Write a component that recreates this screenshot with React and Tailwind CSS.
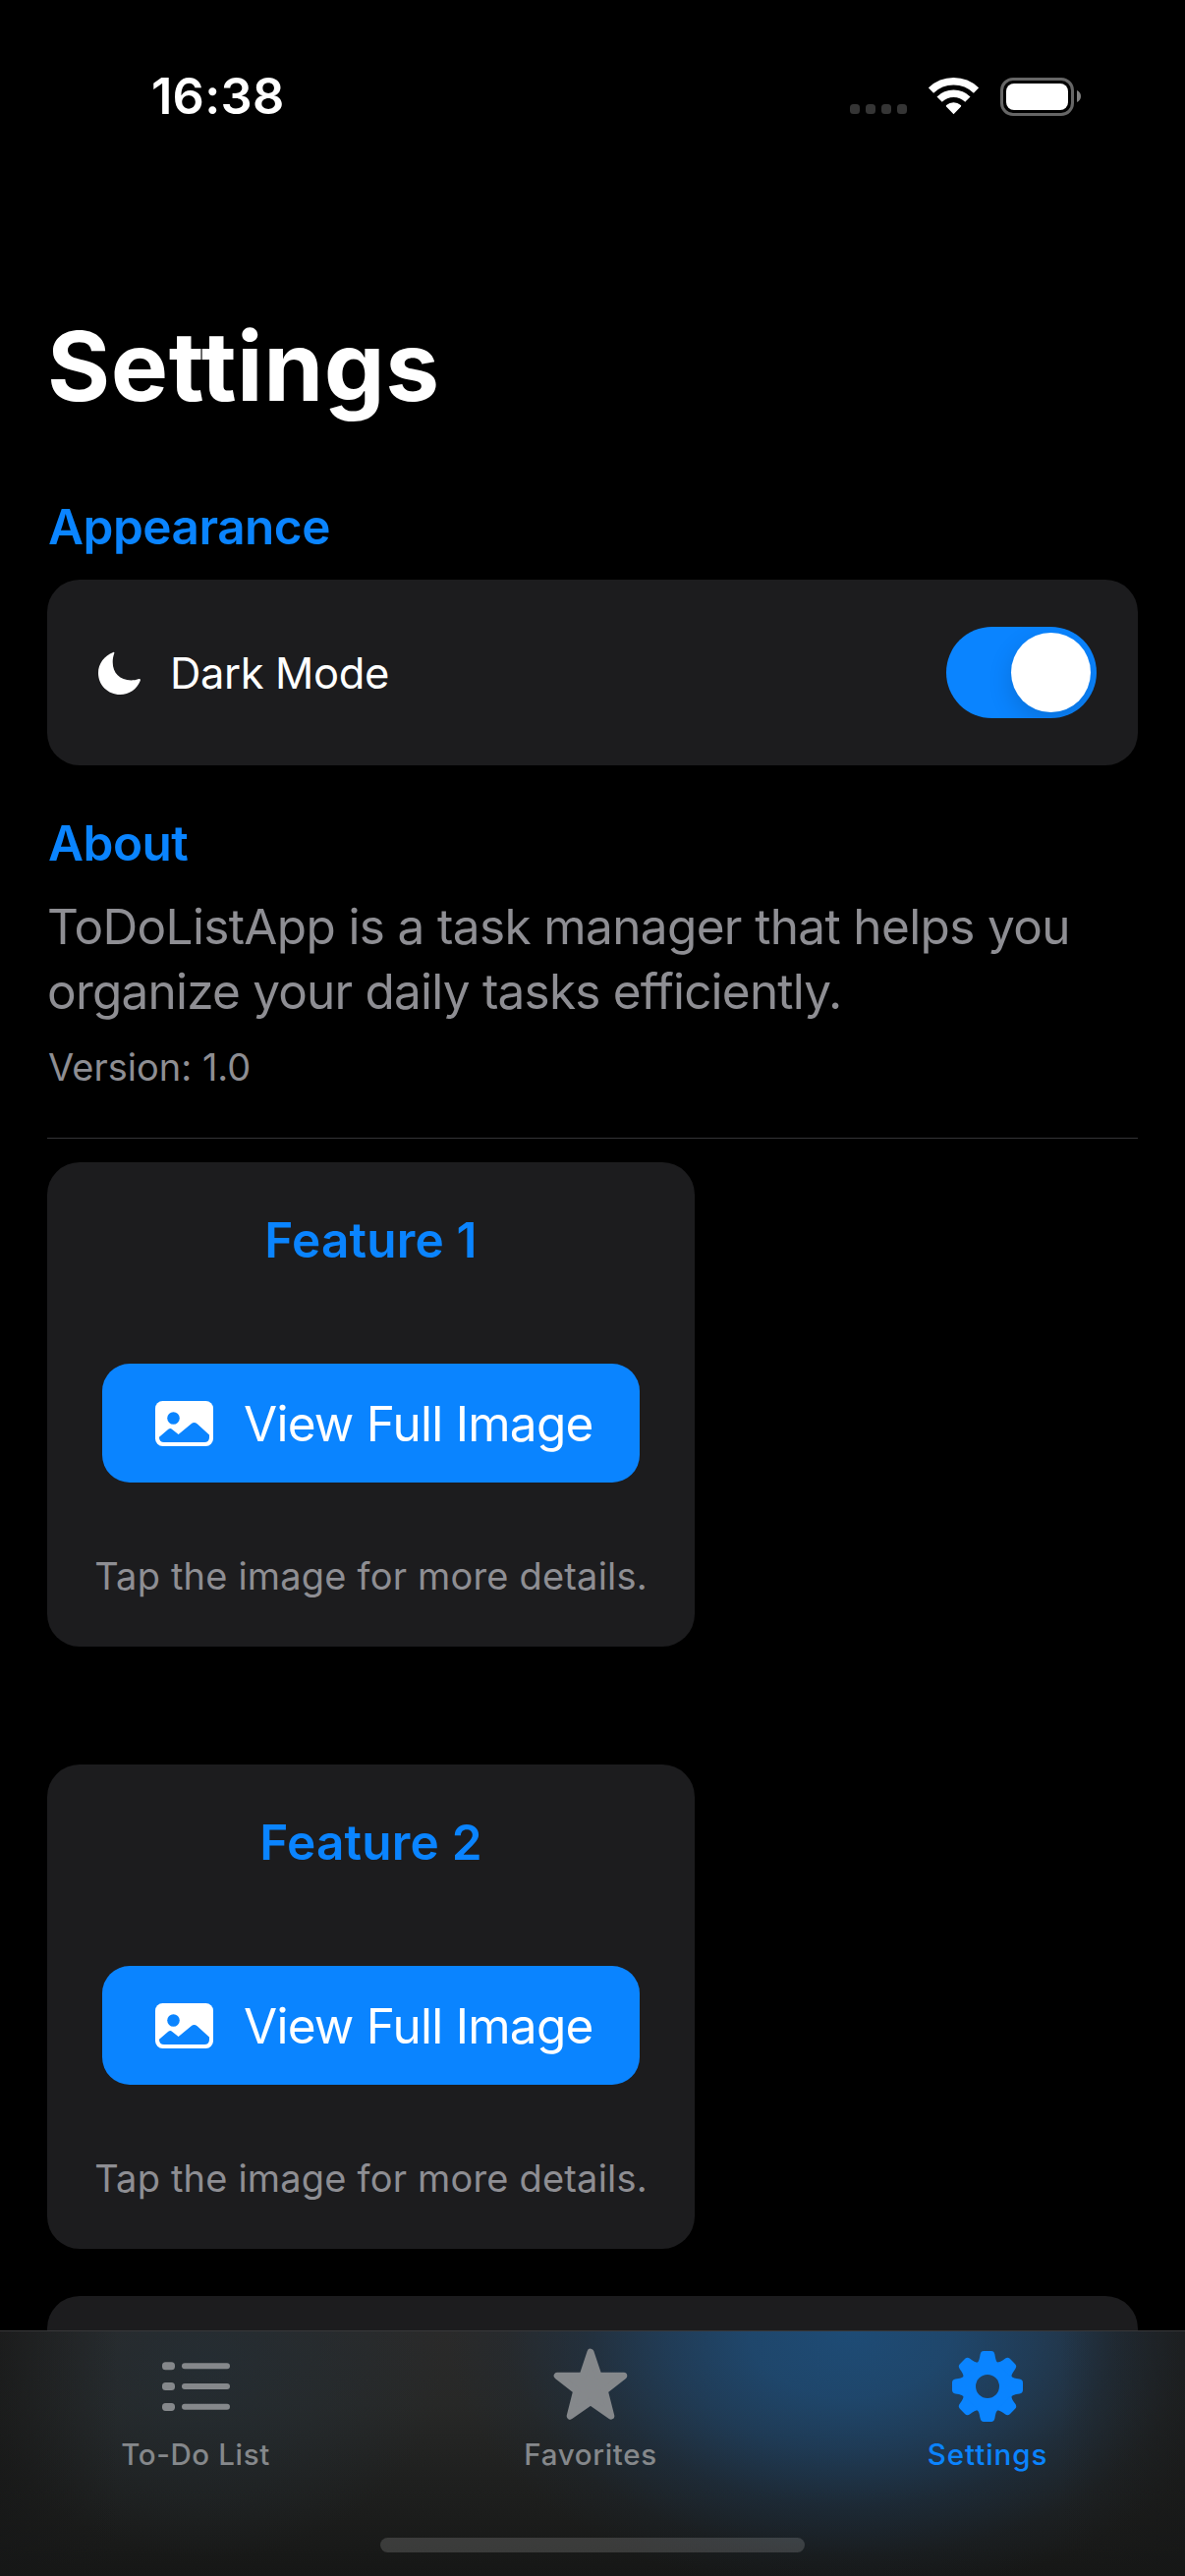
import React from "react";

function WifiIcon() {
  return (
    <svg width="51" height="38" viewBox="0 0 51 38" fill="none">
      <path d="M2.44 13.12A33.2 33.2 0 0 1 48.56 13.12" stroke="#fff" strokeWidth="7.6" />
      <path d="M11.12 22.11A20.7 20.7 0 0 1 39.88 22.11" stroke="#fff" strokeWidth="7.6" />
      <path d="M25.5 37.2L18 29.6Q17.4 28.8 18.2 28.1Q21.4 25.2 25.5 25.2Q29.6 25.2 32.8 28.1Q33.6 28.8 33 29.6Z" fill="#fff" />
    </svg>
  );
}

function MoonIcon() {
  return (
    <svg width="43" height="44" viewBox="0 0 43 44" fill="#fff">
      <path d="M15.2 .9C6 4.3 0 12.5 0 22C0 34.5 10 44 22.2 44C31.5 44 39.3 38.6 42.7 30C43.3 28.3 42.3 27.5 40.6 28.2C38.5 29 36 29.4 33.5 29.4C22 29.4 14.7 22 14.7 11C14.7 8 15.2 5 16.1 2.6C16.7 .9 16.4 .4 15.2 .9Z" />
    </svg>
  );
}

function PhotoIcon() {
  return (
    <svg width="59" height="46" viewBox="0 0 59 46">
      <rect width="59" height="46" rx="7.5" fill="#fff" />
      <circle cx="18.5" cy="17.5" r="6.3" fill="#0a84ff" />
      <path
        d="M4 36.8L13.3 28.8Q15.3 27.4 17.3 28.9L23.6 34L36.6 23.2Q39.6 20.8 42.7 23.3L55 34.4V37Q55 42 50 42H9Q4 42 4 37Z"
        fill="#0a84ff"
      />
    </svg>
  );
}

function ListIcon() {
  return (
    <svg width="69" height="50" viewBox="0 0 69 50" fill="#85888b">
      {[0, 20.8, 41.6].map((y) => (
        <g key={y}>
          <rect x="0" y={y + 0.3} width="13" height="8" rx="3.6" />
          <rect x="20" y={y + 1.2} width="49" height="6" rx="3" />
        </g>
      ))}
    </svg>
  );
}

function StarIcon() {
  return (
    <svg width="76" height="78" viewBox="0 0 76 78">
      <path
        d="M38 4.2L46 28.2H71.8L52.3 43.6L58.8 69.2L38 54.6L17.2 69.2L23.7 43.6L4.2 28.2H30Z"
        fill="#85888b"
        stroke="#85888b"
        strokeWidth="7"
        strokeLinejoin="round"
      />
    </svg>
  );
}

function GearIcon() {
  return (
    <svg width="72" height="72" viewBox="-36 -36 72 72">
      <mask id="gear-hole">
        <rect x="-36" y="-36" width="72" height="72" fill="#fff" />
        <circle r="12" fill="#000" />
      </mask>
      <g fill="#0a84ff" mask="url(#gear-hole)">
        <circle r="26.3" />
        {[0, 45, 90, 135, 180, 225, 270, 315].map((a) => (
          <path
            key={a}
            transform={`rotate(${a})`}
            d="M-11 -23.5C-8.6 -25.6 -8.2 -28 -7.4 -32.6Q-6.8 -36 -3.8 -36H3.8Q6.8 -36 7.4 -32.6C8.2 -28 8.6 -25.6 11 -23.5Z"
          />
        ))}
      </g>
    </svg>
  );
}

function StatusBar() {
  return (
    <div className="flex h-[196px] items-center justify-between pr-[106px] pl-[154px]">
      <span className="text-[50.5px] leading-[60px] font-semibold tracking-[0.25px] text-white">16:38</span>
      <div className="flex items-center">
        <div className="mt-[26px] mr-[22px] flex gap-[6px]">
          {[0, 1, 2, 3].map((i) => (
            <span key={i} className="size-[10px] rounded-[3.5px] bg-[#353535]" />
          ))}
        </div>
        <WifiIcon />
        <div className="ml-[22px] h-[39px] w-[75px] rounded-[13px] border-[3px] border-[#666] p-[3px]">
          <div className="h-full w-full rounded-[8px] bg-white" />
        </div>
        <svg className="ml-[3px]" width="4" height="12" viewBox="0 0 4 12" fill="#808080">
          <path d="M0 0C2.6 1 4 3.4 4 6C4 8.6 2.6 11 0 12Z" />
        </svg>
      </div>
    </div>
  );
}

function FeatureCard({ title }) {
  return (
    <div className="flex w-[659px] flex-col items-center rounded-[33px] bg-[#1c1c1e] py-[49px]">
      <h3 className="text-[49.5px] leading-[60px] font-semibold tracking-[0.2px] text-[#0a84ff]">{title}</h3>
      <button className="mt-[96px] flex h-[121px] w-[547px] items-center rounded-[28px] bg-[#0a84ff] pl-[54px]">
        <PhotoIcon />
        <span className="ml-[31px] text-[49.5px] leading-[60px] tracking-[-0.755px] whitespace-nowrap text-white">
          View Full Image
        </span>
      </button>
      <p className="mt-[72px] text-[38px] leading-[46px] tracking-[0.186px] whitespace-nowrap text-[#8e8e93]">
        Tap the image for more details.
      </p>
    </div>
  );
}

function Tab({ icon, label, className }) {
  return (
    <div className={`flex flex-col items-center ${className}`}>
      <div className="flex h-[76px] items-center">{icon}</div>
      <span className="mt-[13px] text-[29.5px] leading-[36px] font-medium whitespace-nowrap">{label}</span>
    </div>
  );
}

function TabBar() {
  return (
    <nav className="absolute inset-x-0 bottom-0 flex h-[250px] flex-col border-t border-[#38383a] bg-[linear-gradient(to_right,rgba(22,23,23,0.7)_0px,rgba(22,23,23,0)_120px,rgba(22,23,23,0)_1080px,rgba(22,23,23,0.6)_1206px),radial-gradient(ellipse_410px_270px_at_865px_0px,rgba(28,80,128,0.88)_0%,rgba(29,76,120,0.84)_25%,rgba(29,68,106,0.7)_45%,rgba(28,54,80,0.48)_66%,rgba(28,44,60,0.2)_85%,rgba(28,40,52,0)_100%),radial-gradient(ellipse_240px_200px_at_210px_30px,rgba(35,46,54,0.7)_0%,rgba(35,45,52,0.42)_50%,rgba(35,45,50,0)_100%),linear-gradient(to_bottom,#2a2a2a_0%,#272827_30%,#1f201f_60%,#161716_100%)]">
      <div className="grid grid-cols-[398px_406px_402px] pt-[18px]">
        <Tab className="tracking-[0.62px] text-[#85888b]" icon={<ListIcon />} label="To-Do List" />
        <Tab className="tracking-[0.66px] text-[#85888b]" icon={<StarIcon />} label="Favorites" />
        <Tab className="tracking-[0.95px] text-[#0a84ff]" icon={<GearIcon />} label="Settings" />
      </div>
      <div className="mx-auto mt-[67px] h-[15px] w-[432px] rounded-full bg-white/15" />
    </nav>
  );
}

export default function App() {
  return (
    <div className="relative h-[2622px] w-[1206px] overflow-hidden bg-black font-['Inter',sans-serif]">
      <StatusBar />
      <main className="flex flex-col px-[48px]">
        <h1 className="mt-[116px] text-[98px] leading-[122px] font-bold tracking-[0.55px] text-white">Settings</h1>

        <h2 className="mt-[72px] ml-px text-[49.5px] leading-[60px] font-semibold tracking-[-0.5px] text-[#0a84ff]">
          Appearance
        </h2>
        <div className="mt-[24px] flex h-[189px] items-center rounded-[33px] bg-[#1c1c1e] pr-[42px] pl-[52px]">
          <MoonIcon />
          <span className="ml-[30px] text-[43.5px] leading-[60px] tracking-[-0.375px] text-white">Dark Mode</span>
          <div className="ml-auto flex h-[93px] w-[153px] justify-end overflow-hidden rounded-full bg-[#0a84ff] p-[6px]">
            <div className="size-[81px] rounded-full bg-white shadow-[0_9px_24px_rgba(0,0,0,0.15)]" />
          </div>
        </div>

        <h2 className="mt-[49px] ml-px text-[49.5px] leading-[60px] font-semibold tracking-[-0.5px] text-[#0a84ff]">
          About
        </h2>
        <p className="mt-[22px] text-[49.5px] leading-[66px] whitespace-nowrap text-[#8e8e93]">
          <span className="tracking-[-0.64px]">ToDoListApp is a task manager that helps you</span>
          <br />
          <span className="tracking-[-0.79px]">organize your daily tasks efficiently.</span>
        </p>
        <p className="mt-[21px] ml-px text-[38px] leading-[46px] text-[#8e8e93]">Version: 1.0</p>
        <div className="mt-[49px] h-px bg-[#333336]" />

        <div className="mt-[24px] flex flex-col gap-[120px]">
          <FeatureCard title="Feature 1" />
          <FeatureCard title="Feature 2" />
        </div>
        <div className="mt-[48px] h-[189px] rounded-[33px] bg-[#1c1c1e]" />
      </main>
      <TabBar />
    </div>
  );
}
